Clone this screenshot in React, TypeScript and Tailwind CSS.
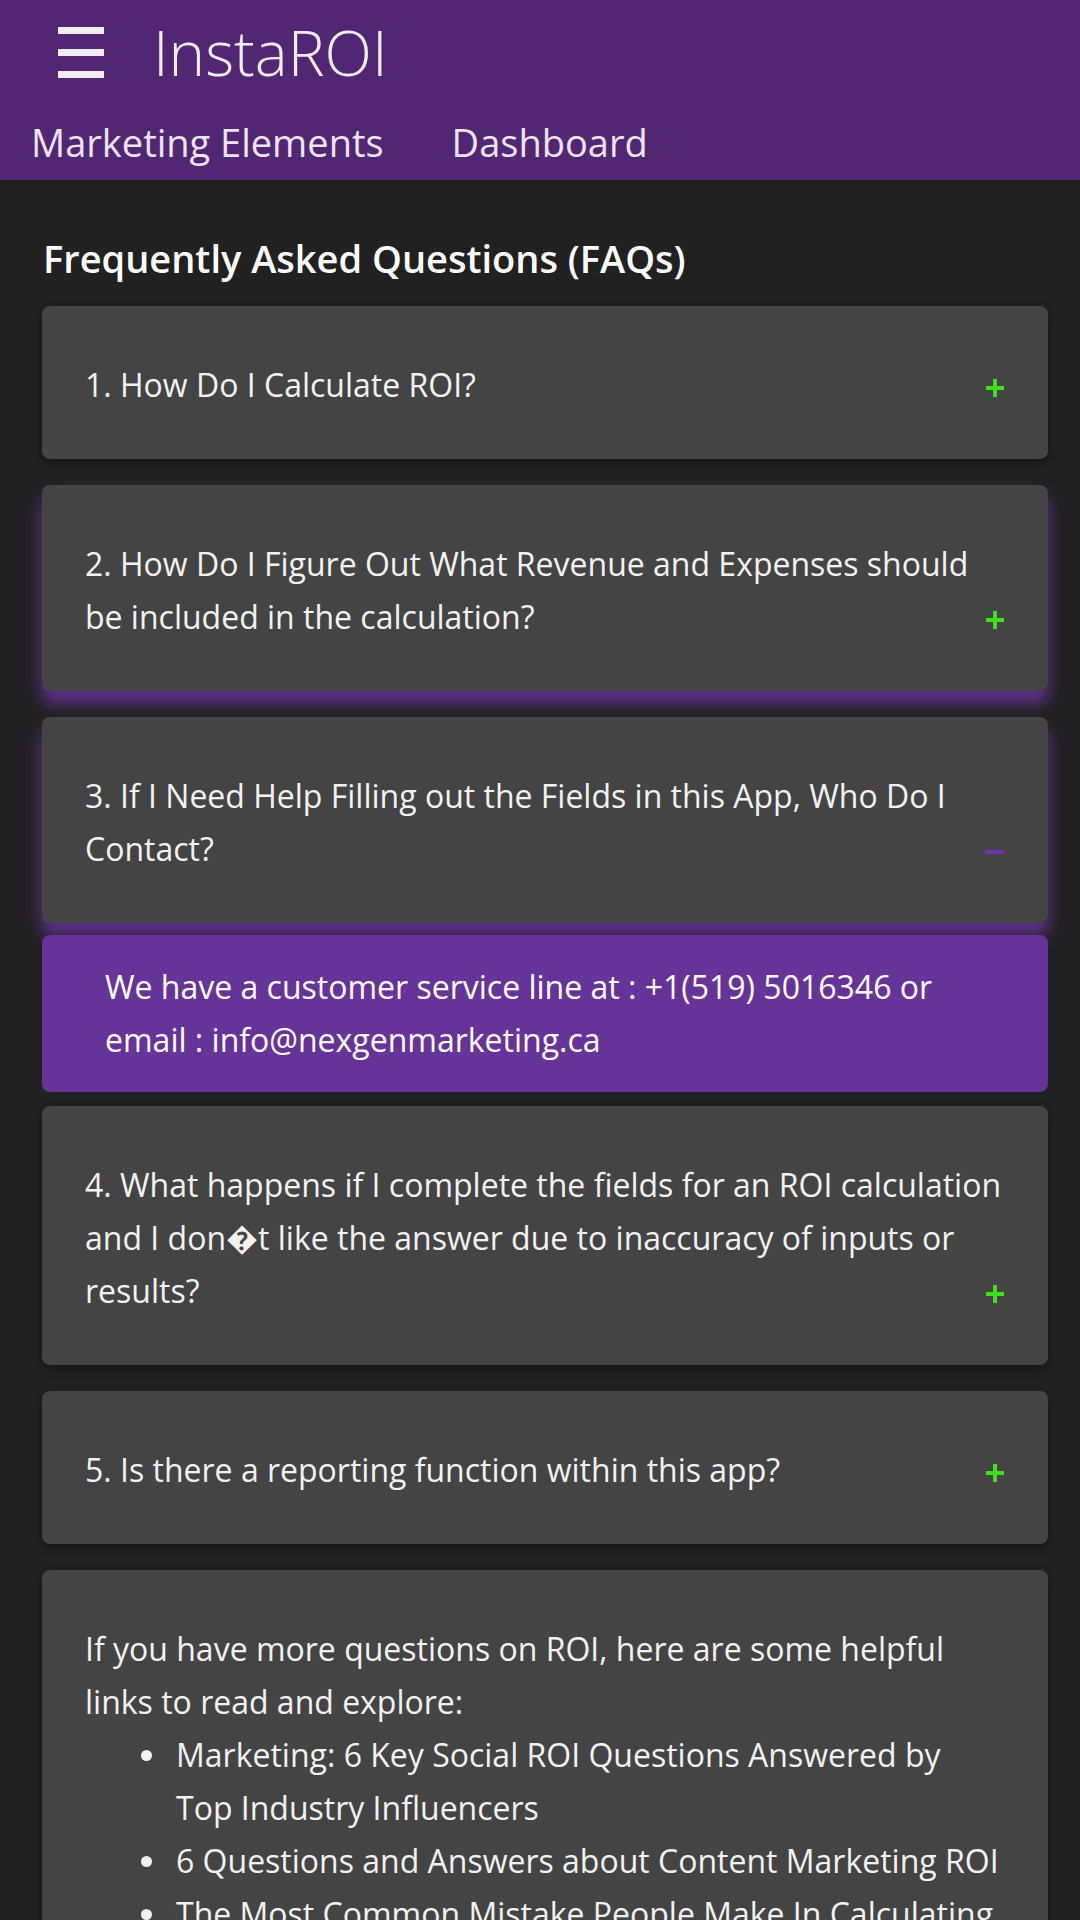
import clsx from 'clsx';

type Faq = {
  q: string;
  open?: boolean;
  glow?: boolean;
  a?: string;
};

const faqs: Faq[] = [
  { q: '1. How Do I Calculate ROI?' },
  {
    q: '2. How Do I Figure Out What Revenue and Expenses should be included in the calculation?',
    glow: true,
  },
  {
    q: '3. If I Need Help Filling out the Fields in this App, Who Do I Contact?',
    open: true,
    glow: true,
    a: 'We have a customer service line at : +1(519) 5016346 or email : info@nexgenmarketing.ca',
  },
  {
    q: '4. What happens if I complete the fields for an ROI calculation and I don\uFFFDt like the answer due to inaccuracy of inputs or results?',
  },
  { q: '5. Is there a reporting function within this app?' },
];

const links = [
  'Marketing: 6 Key Social ROI Questions Answered by Top Industry Influencers',
  '6 Questions and Answers about Content Marketing ROI',
  'The Most Common Mistake People Make In Calculating Marketing ROI',
  'How to Measure the ROI of Your Marketing Campaigns',
];

function Plus() {
  return (
    <svg width="18" height="20" viewBox="0 0 18 20">
      <path d="M9 1v18M0 10h18" stroke="#3ee01c" strokeWidth="4" />
    </svg>
  );
}

function Minus() {
  return (
    <svg width="19" height="4" viewBox="0 0 19 4">
      <path d="M0 2h19" stroke="#6d35ad" strokeWidth="4" />
    </svg>
  );
}

function FaqItem({ item }: { item: Faq }) {
  return (
    <>
      <div
        className={clsx(
          'flow-root rounded-lg bg-[#444444] pl-[43px] pr-[44px] pt-[52px] pb-[48px] text-[32px] leading-[53px] text-[#f2f2f2]',
          item.glow
            ? 'shadow-[0_12px_16px_rgba(102,51,153,0.9)]'
            : 'shadow-[0_4px_8px_rgba(0,0,0,0.35)]'
        )}
      >
        {item.q}
        <span className="float-right flex h-[53px] items-center pt-[6px]">
          {item.open ? <Minus /> : <Plus />}
        </span>
      </div>
      {item.open && item.a && (
        <div className="-mt-[14px] -mb-[12px] rounded-lg bg-[#663399] pl-[63px] pr-[40px] pt-[25px] pb-[26px] text-[32px] leading-[53px] text-white">
          {item.a}
        </div>
      )}
    </>
  );
}

export default function App() {
  return (
    <div className="min-h-screen bg-[#212121] font-['Open_Sans','DejaVu_Sans',sans-serif]">
      {/* header */}
      <header className="bg-[#512672] pb-[15px] text-[#ece4f3]">
        <div className="flex items-center pt-[22px]">
          <div className="ml-[58px] flex w-[46px] flex-col gap-[15px]">
            <span className="h-[7px] bg-[#f1eef3]" />
            <span className="h-[7px] bg-[#f1eef3]" />
            <span className="h-[7px] bg-[#f1eef3]" />
          </div>
          <span className="ml-[49px] text-[62px] font-light leading-[60px] text-[#f1eef3]">
            InstaROI
          </span>
        </div>
        <nav className="mt-[37px] flex gap-[68px] pl-[31px] text-[38px] leading-[46px]">
          <a>Marketing Elements</a>
          <a>Dashboard</a>
        </nav>
      </header>

      {/* faq list */}
      <main className="pl-[42px] pr-[32px] pb-10">
        <h1 className="mt-[55px] mb-[25px] pl-[1px] text-[38px] font-semibold leading-[46px] text-white">
          Frequently Asked Questions (FAQs)
        </h1>
        <div className="flex flex-col gap-[26px]">
          {faqs.map((item) => (
            <FaqItem key={item.q} item={item} />
          ))}
          <div className="rounded-lg bg-[#444444] pl-[43px] pr-[48px] pt-[52px] pb-[48px] text-[32px] leading-[53px] text-[#f2f2f2] shadow-[0_4px_8px_rgba(0,0,0,0.35)]">
            <p>If you have more questions on ROI, here are some helpful links to read and explore:</p>
            <ul>
              {links.map((l) => (
                <li key={l} className="flex">
                  <span className="ml-[56px] flex h-[53px] w-[35px] shrink-0 items-center pt-[2px]">
                    <span className="h-[11px] w-[11px] rounded-full bg-[#f2f2f2]" />
                  </span>
                  <span>{l}</span>
                </li>
              ))}
            </ul>
          </div>
        </div>
      </main>
    </div>
  );
}
